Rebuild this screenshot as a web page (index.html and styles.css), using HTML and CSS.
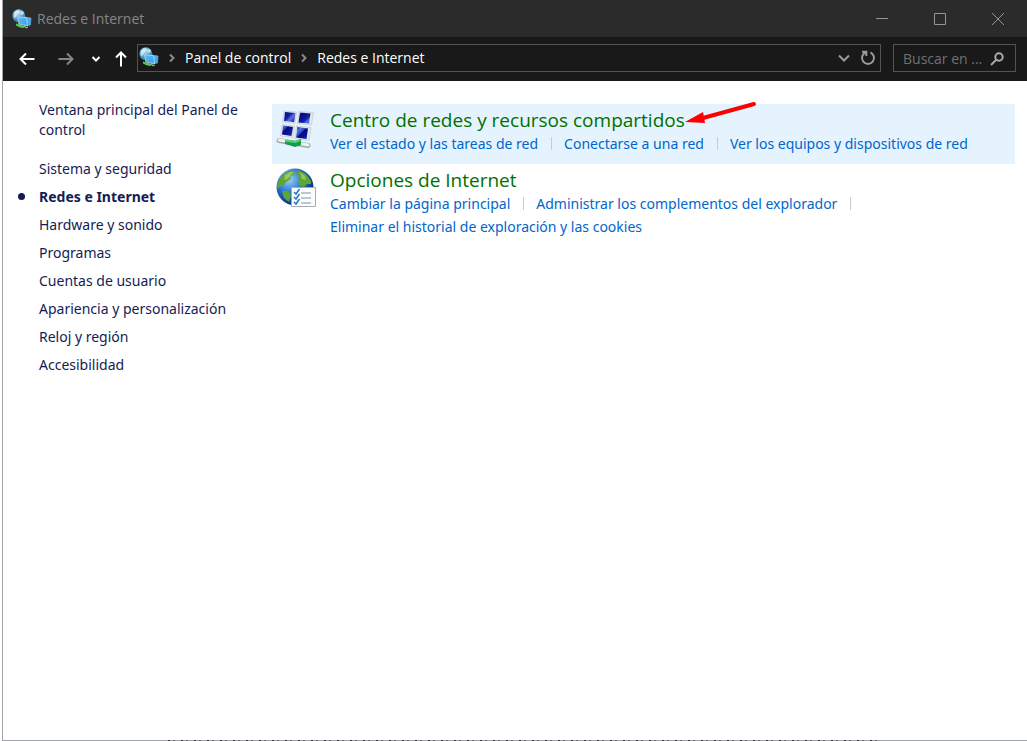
FILE: index.html
```html
<!DOCTYPE html>
<html lang="es">
<head>
<meta charset="utf-8">
<title>Redes e Internet</title>
<link rel="stylesheet" href="styles.css">
</head>
<body>
<svg class="defs" aria-hidden="true">
  <defs>
    <radialGradient id="ball" cx=".4" cy=".3" r=".75"><stop offset="0" stop-color="#c9e6f5"/><stop offset=".55" stop-color="#5ba3cf"/><stop offset="1" stop-color="#23699e"/></radialGradient>
    <linearGradient id="screen" x2="1" y2="1"><stop offset="0" stop-color="#5fc0fa"/><stop offset="1" stop-color="#2ba0f2"/></linearGradient>
    <symbol id="net" viewBox="0 0 20 20">
      <circle cx="6.800" cy="6.800" r="6.500" fill="url(#ball)"/>
      <path d="M2 4q2-3 5-3l1 2-3 2-1 3-2 1zM8 3l3-1 1 3-3 1z" fill="#dff1f8" opacity=".75"/>
      <path d="M4 14.500l4 1 5 1.500-1 2-4-.5-4-2z" fill="#55c94a"/>
      <path d="M12 8l7 1-.5 7-5 1z" fill="url(#screen)" stroke="#8ba7b8" stroke-width=".7"/>
      <path d="M5.500 8l9 .5 1 8-8.500-1.500z" fill="url(#screen)" stroke="#c3d3dc" stroke-width=".8"/>
      <path d="M12 16l2 3 2-1" fill="none" stroke="#bcc2c4"/>
    </symbol>
  </defs>
</svg>
<div class="window">
  <header class="titlebar">
    <svg class="app-icon"><use href="#net"/></svg>
    <h1 class="title">Redes e Internet</h1>
    <button class="win-btn" aria-label="Minimizar"><svg width="12" height="12"><path d="M0 5.500h12"/></svg></button>
    <button class="win-btn" aria-label="Maximizar"><svg width="12" height="12"><path d="M.5.5h11v11H.5z"/></svg></button>
    <button class="win-btn" aria-label="Cerrar"><svg width="12" height="12"><path d="M0 0l12 12M12 0L0 12"/></svg></button>
  </header>
  <nav class="toolbar" aria-label="Navegación">
    <button class="nav-btn" aria-label="Atrás"><svg width="16" height="14"><path d="M15.500 7H1.500M7 1.500L1.500 7L7 12.500"/></svg></button>
    <button class="nav-btn dim" aria-label="Adelante"><svg width="16" height="14"><path d="M.5 7h14M9 1.500L14.500 7L9 12.500"/></svg></button>
    <button class="nav-btn small" aria-label="Ubicaciones recientes"><svg width="10" height="8"><path d="M1.500 2L5 5.500L8.500 2"/></svg></button>
    <button class="nav-btn small" aria-label="Subir"><svg width="12" height="16"><path d="M6 15.500V1.500M1 6.500l5-5 5 5"/></svg></button>
    <div class="address">
      <svg class="app-icon"><use href="#net"/></svg>
      <svg class="crumb-sep" width="6" height="10"><path d="M1 1.500L4.500 5L1 8.500"/></svg>
      <a class="crumb" href="#">Panel de control</a>
      <svg class="crumb-sep" width="6" height="10"><path d="M1 1.500L4.500 5L1 8.500"/></svg>
      <a class="crumb" href="#">Redes e Internet</a>
      <button class="addr-btn first" aria-label="Ubicaciones anteriores"><svg width="12" height="8"><path d="M1 1.500l5 5 5-5"/></svg></button>
      <button class="addr-btn" aria-label="Actualizar"><svg width="16" height="16"><path d="M10.500 2.500a6 6 0 1 1-5 0M2 1.700h4.300V6"/></svg></button>
    </div>
    <form class="search">
      <input type="text" class="search-input" placeholder="Buscar en ..." aria-label="Buscar en el Panel de control">
      <svg width="14" height="14"><circle cx="9" cy="5" r="3.700"/><path d="M6.500 7.500L1 13"/></svg>
    </form>
  </nav>
  <div class="body">
    <aside class="sidebar">
      <a class="home" href="#">Ventana principal del Panel de control</a>
      <ul class="cats">
        <li><a href="#">Sistema y seguridad</a></li>
        <li class="current"><a href="#" aria-current="page">Redes e Internet</a></li>
        <li><a href="#">Hardware y sonido</a></li>
        <li><a href="#">Programas</a></li>
        <li><a href="#">Cuentas de usuario</a></li>
        <li><a href="#">Apariencia y personalización</a></li>
        <li><a href="#">Reloj y región</a></li>
        <li><a href="#">Accesibilidad</a></li>
      </ul>
    </aside>
    <main class="content">
      <section class="group active">
        <svg class="group-icon" viewBox="0 0 40 40">
          <defs><linearGradient id="blue" gradientUnits="userSpaceOnUse" x1="7" y1="4" x2="17" y2="14" spreadMethod="repeat"><stop offset="0" stop-color="#00087c"/><stop offset=".5" stop-color="#1020a8"/><stop offset=".7" stop-color="#5a74dc"/><stop offset="1" stop-color="#1a2cba"/></linearGradient></defs>
          <path d="M8 3l12.500 1-1.500 11.500-12.500-1.500zM23 3.500l14.500 1-2 12.500-14-1.500zM6 16.500l12.500 1.500-1.500 11.500-12.500-1.500zM20.500 18l14.500 1.500-2 13-14-1.500z" fill="#e3e8ec" stroke="#bac3cb" stroke-width=".6"/>
          <path d="M9 4l10.500 1-1.500 9-10-1zM24 4.500l10.500 1-1.500 10-10.500-1zM7 17.500l10 1.500-1.500 9-9.500-1.500zM21.500 19l10.500 1.500-1.500 10.500-10.500-1.500z" fill="url(#blue)"/>
          <path d="M3 32.500l29 5" stroke="#9fa9a9" stroke-width="5" stroke-linecap="round"/>
          <path d="M3 32l29 5" stroke="#edf2ef" stroke-width="3" stroke-linecap="round"/>
          <path d="M9 32l11 1 5-2v6l-6 2-10-3z" fill="#189c4b"/>
          <path d="M9 32.500l10 1.500 5-2" fill="none" stroke="#57cf7b" stroke-width="2"/>
        </svg>
        <div class="group-text">
          <h2><a href="#">Centro de redes y recursos compartidos</a></h2>
          <ul class="tasks">
            <li><a href="#">Ver el estado y las tareas de red</a></li>
            <li><a href="#">Conectarse a una red</a></li>
            <li><a href="#">Ver los equipos y dispositivos de red</a></li>
          </ul>
        </div>
        <svg class="arrow" width="72" height="26" aria-hidden="true"><path d="M69 3L18 17" stroke="#f00" stroke-width="4" stroke-linecap="round"/><path d="M0 21l18-10 2 11z" fill="#f00"/></svg>
      </section>
      <section class="group">
        <svg class="group-icon" viewBox="0 0 40 40">
          <defs><radialGradient id="earth" cx=".35" cy=".3" r=".75"><stop offset="0" stop-color="#9bd0fa"/><stop offset=".5" stop-color="#266fc8"/><stop offset="1" stop-color="#062470"/></radialGradient></defs>
          <circle cx="19" cy="19" r="18.500" fill="url(#earth)"/>
          <path d="M8 6l5-3 6 0-1 4-4 1 1 3-5 3-3 4-3 0-2 3-1-2q1-8 7-13zM22 2l8 4 5 7 0 3-4 0-3 3-4-1-2-5 2-3-3-3zM6 23l6 0 3 4-2 7-5-4z" fill="#5da534"/>
          <path d="M9 7l5-3 4 0-3 3-3 4-4 1zM24 4l5 4 1 4-4-1z" fill="#b2d765" opacity=".7"/>
          <path d="M15.500 19.500h24v19h-24z" fill="#fbfcfd" stroke="#a5adb3"/>
          <path d="M25 25h10M25 30h10M25 35h10" stroke="#879098" stroke-width="1"/>
          <path d="M18 24l2 2 3.500-5M18 29l2 2 3.500-5M18 34l2 2 3.500-5" fill="none" stroke="#2478b8" stroke-width="1.500"/>
        </svg>
        <div class="group-text">
          <h2><a href="#">Opciones de Internet</a></h2>
          <ul class="tasks">
            <li><a href="#">Cambiar la página principal</a></li>
            <li><a href="#">Administrar los complementos del explorador</a></li>
            <li><a href="#">Eliminar el historial de exploración y las cookies</a></li>
          </ul>
        </div>
      </section>
    </main>
  </div>
  <div class="edge"></div>
</div>
</body>
</html>
```
FILE: styles.css
```css
* { box-sizing: border-box; }
body { margin: 0; background: #fff; font: 14px/20px "Noto Sans", "Open Sans", sans-serif; }
a { color: inherit; text-decoration: none; }
ul { list-style: none; margin: 0; padding: 0; }
h1, h2 { margin: 0; font-weight: 400; }
button { display: flex; align-items: center; justify-content: center; border: 0; padding: 0; background: none; color: inherit; }
button svg, .crumb-sep, .search svg { fill: none; stroke: currentColor; flex: none; }
.defs { position: absolute; width: 0; height: 0; }
.window { min-height: 100vh; margin-left: 2px; border-left: 1px solid #a3a4a7; display: flex; flex-direction: column; }
.titlebar { display: flex; align-items: center; height: 37px; padding-left: 9px; background: #2b2b2b; color: #868686; }
.app-icon { width: 20px; height: 20px; flex: none; }
.title { flex: 1; margin-left: 5px; font: 14px/20px "Open Sans", "Noto Sans", sans-serif; }
.win-btn { width: 58px; height: 37px; color: #949494; }
.toolbar { display: flex; align-items: center; height: 44px; padding: 0 11px 2px 8px; background: #191919; color: #fff; font-family: "Open Sans", "Noto Sans", sans-serif; }
.nav-btn { width: 32px; height: 28px; margin-right: 7px; padding-top: 2px; }
.nav-btn svg { stroke-width: 2; }
.nav-btn.small { width: 20px; margin-right: 5px; }
.nav-btn.dim { margin-right: 4px; color: #858585; }
.address { display: flex; align-items: center; flex: 1; height: 28px; margin: 0 12px 0 1px; padding-left: 1px; border: 1px solid #535353; }
.address .app-icon { margin-bottom: 2px; }
.crumb-sep { margin: 0 10px; color: #8a8a8a; stroke-width: 2; }
.addr-btn { width: 24px; height: 24px; color: #9a9a9a; }
.addr-btn svg { stroke-width: 2; }
.addr-btn.first { margin-left: auto; }
.search { display: flex; align-items: center; width: 123px; height: 28px; padding: 1px 11px 0 9px; border: 1px solid #535353; color: #aaa; }
.search svg { stroke-width: 2; }
.search-input { flex: 1; min-width: 0; padding: 0; border: 0; outline: 0; background: none; color: #ccc; font: inherit; }
.search-input::placeholder { color: #707070; opacity: 1; }
.body { display: flex; flex: 1; padding-right: 12px; }
.sidebar { width: 269px; flex: none; padding: 19px 28px 0 36px; color: #151c55; }
.home { display: block; margin-bottom: 15px; }
.cats li { position: relative; line-height: 28px; }
.current { font-weight: 700; }
.current::before { content: ""; position: absolute; left: -21px; top: 10px; width: 7px; height: 7px; border-radius: 50%; background: #151c55; }
.content { flex: 1; padding-top: 23px; }
.group { position: relative; display: flex; padding: 4px 4px 8px; }
.active { background: #e5f3ff; height: 60px; }
.group-icon { width: 40px; height: 40px; flex: none; overflow: visible; }
.group-text { margin-left: 14px; flex: 1; }
.group h2 { font: 19px/24px "Open Sans", "Noto Sans", sans-serif; color: #007000; }
.tasks { display: flex; flex-wrap: wrap; line-height: 23px; color: #0066cc; }
.tasks li { display: flex; align-items: center; }
.tasks li:not(:last-child)::after { content: ""; width: 1px; height: 13px; margin: 0 12px 0 13px; background: #c4cdd5; }
.arrow { position: absolute; left: 413px; top: -3px; fill: none; }
.edge { height: 1px; background: #a3a4a7; padding: 0 150px 0 165px; }
.edge::before { content: ""; display: block; height: 1px; background: repeating-linear-gradient(90deg, #333 0 2px, #a3a4a7 2px 5px, #666 5px 7px, #a3a4a7 7px 13px); }
```
